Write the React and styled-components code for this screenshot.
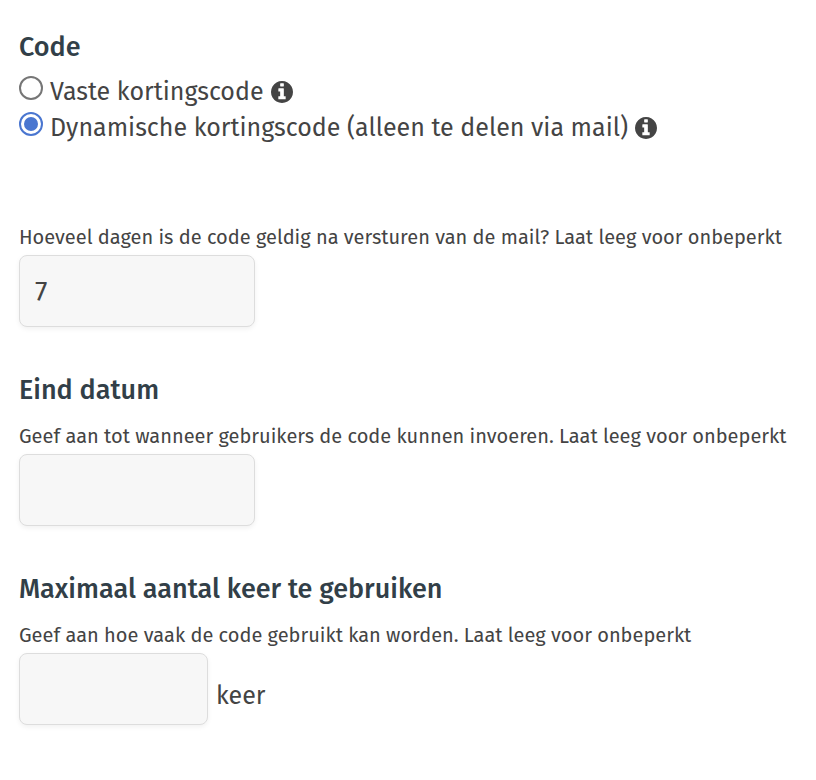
import React,{useState} from "react";
import styled,{createGlobalStyle} from "styled-components";

const GlobalStyle = createGlobalStyle`
*{
box-sizing:border-box;
}
body{
margin:0;
background:#ffffff;
color:#444444;
font-family:"Fira Sans","Noto Sans",sans-serif;
font-size:25px;
}
`;

const CodeForm = styled.form`
display:flex;
flex-direction:column;
padding:28px 19px;
`;

const Section = styled.section`
display:flex;
flex-direction:column;
margin-bottom:${props => props.$wide ? "72px" : "44px"};
`;

const Title = styled.h2`
margin:0 0 7px;
color:#323f48;
font-size:27px;
font-weight:500;
line-height:38px;
`;

const Option = styled.div`
display:flex;
align-items:center;
height:36px;
padding-top:2px;
gap:7px;
`;

const Radio = styled.input`
appearance:none;
flex:none;
width:24px;
height:24px;
margin:0 0 8px;
border:2px solid ${props => props.checked ? "#4a76d0" : "#767676"};
border-radius:50%;
background:${props => props.checked ? "#4a76d0" : "#ffffff"};
background-clip:content-box;
padding:3px;
`;

const Icon = styled.svg`
flex:none;
width:22px;
height:22px;
fill:currentColor;
`;

const Hint = styled.label`
margin:6px 0 4px;
font-size:20px;
line-height:28px;
`;

const Row = styled.div`
display:flex;
align-items:center;
gap:8px;
`;

const Unit = styled.label`
padding-top:14px;
`;

const TextInput = styled.input`
width:${props => props.$short ? "189px" : "236px"};
height:72px;
padding:0 15px;
border:1px solid #dddddd;
border-radius:8px;
background:#f7f7f7;
box-shadow:0 2px 5px rgba(0,0,0,0.06);
color:inherit;
font-family:inherit;
font-size:28px;
`;

const InfoIcon = () => (
    <Icon viewBox="0 128 1536 1536" aria-hidden="true">
        <path d="M1024 1376v-160q0-14-9-23t-23-9h-96v-512q0-14-9-23t-23-9h-320q-14 0-23 9t-9 23v160q0 14 9 23t23 9h96v320h-96q-14 0-23 9t-9 23v160q0 14 9 23t23 9h448q14 0 23-9t9-23zm-128-896v-160q0-14-9-23t-23-9h-192q-14 0-23 9t-9 23v160q0 14 9 23t23 9h192q14 0 23-9t9-23zm640 416q0 209-103 385.5t-279.5 279.5-385.5 103-385.5-103-279.5-279.5-103-385.5 103-385.5 279.5-279.5 385.5-103 385.5 103 279.5 279.5 103 385.5z"/>
    </Icon>
);

const App = () => {
    const [type,setType] = useState("dynamic");
    const [days,setDays] = useState("7");

    return (
        <CodeForm>
            <GlobalStyle/>
            <Section $wide>
                <Title>Code</Title>
                <Option>
                    <Radio type="radio" name="type" id="fixed" checked={type === "fixed"} onChange={()=>setType("fixed")}/>
                    <label htmlFor="fixed">Vaste kortingscode</label>
                    <InfoIcon/>
                </Option>
                <Option>
                    <Radio type="radio" name="type" id="dynamic" checked={type === "dynamic"} onChange={()=>setType("dynamic")}/>
                    <label htmlFor="dynamic">Dynamische kortingscode (alleen te delen via mail)</label>
                    <InfoIcon/>
                </Option>
            </Section>
            <Section>
                <Hint htmlFor="days">Hoeveel dagen is de code geldig na versturen van de mail? Laat leeg voor onbeperkt</Hint>
                <TextInput id="days" type="text" value={days} onChange={e=>setDays(e.target.value)}/>
            </Section>
            <Section>
                <Title>Eind datum</Title>
                <Hint htmlFor="end">Geef aan tot wanneer gebruikers de code kunnen invoeren. Laat leeg voor onbeperkt</Hint>
                <TextInput id="end" type="text"/>
            </Section>
            <Section>
                <Title>Maximaal aantal keer te gebruiken</Title>
                <Hint htmlFor="max">Geef aan hoe vaak de code gebruikt kan worden. Laat leeg voor onbeperkt</Hint>
                <Row>
                    <TextInput id="max" type="text" $short/>
                    <Unit htmlFor="max">keer</Unit>
                </Row>
            </Section>
        </CodeForm>
    )
};

export default App;
